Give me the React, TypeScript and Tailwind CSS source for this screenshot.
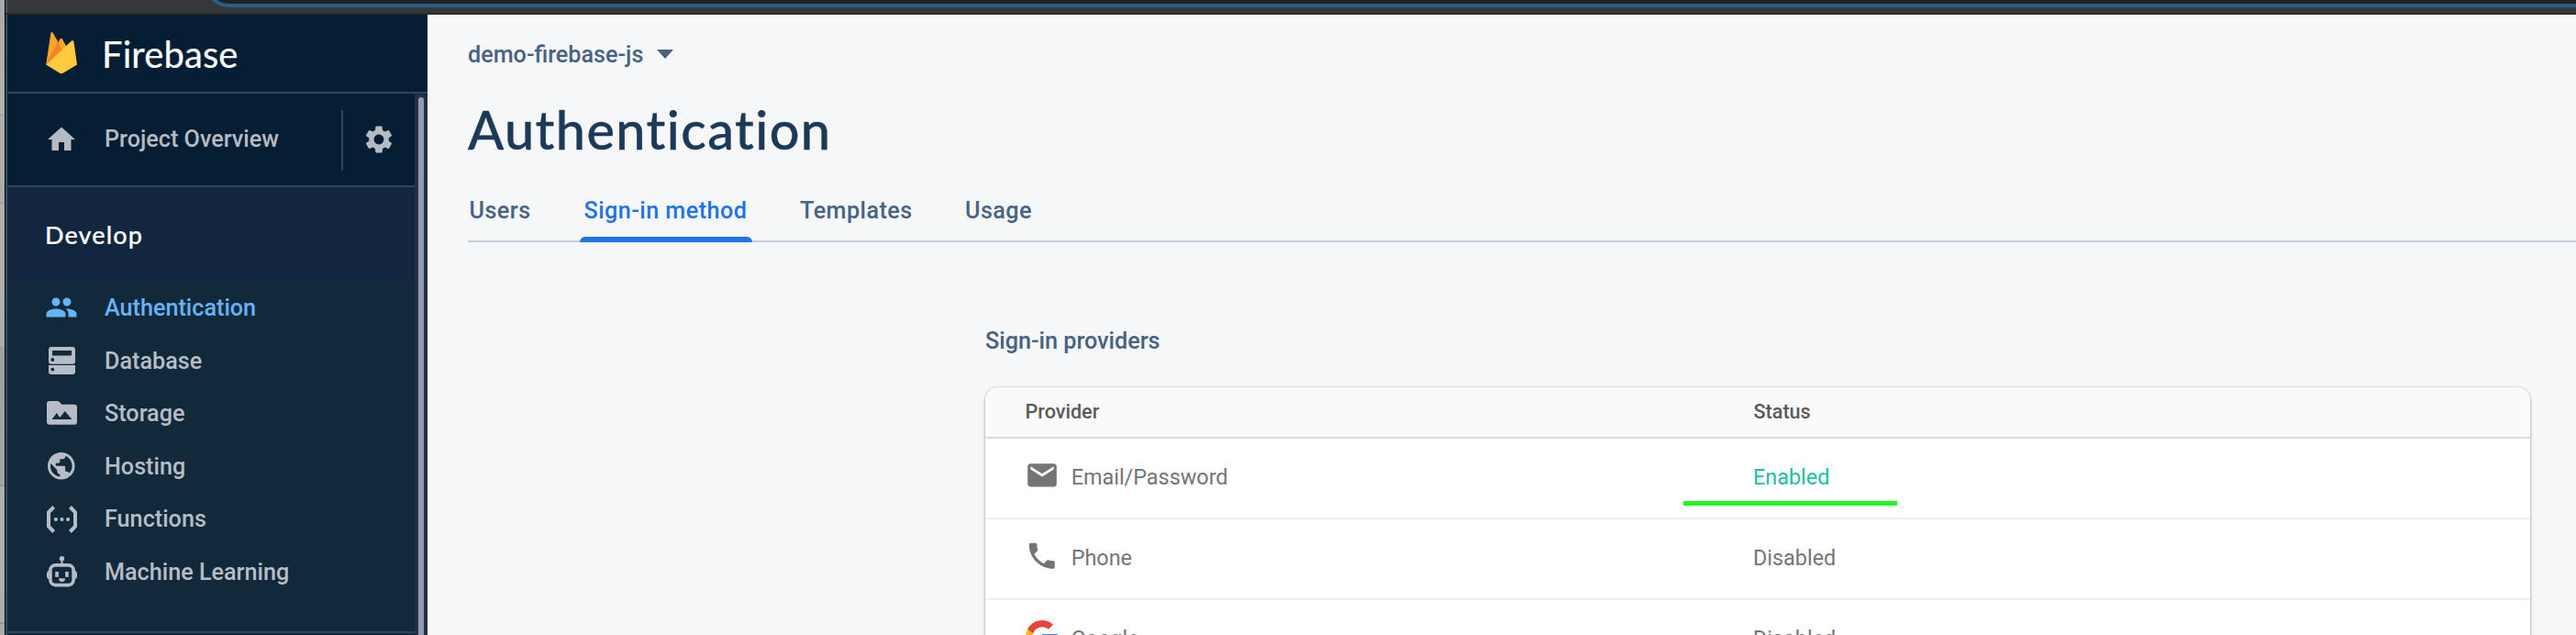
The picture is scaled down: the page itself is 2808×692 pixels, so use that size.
import React from "react";
import { MdHome, MdSettings, MdPeople, MdPublic, MdEmail, MdPhone } from "react-icons/md";

const FlameLogo = () => (
  <svg width="34" height="46" viewBox="0 0 34 46">
    <path d="M.2 35.6 5.4 1.1C5.6 0 7.1-.3 7.7.7l6 10.6L.2 35.6Z" fill="#ffa62b" />
    <path d="m.2 35.6 15.3-28c.6-1 1.9-1 2.4 0L23 17 .2 35.6Z" fill="#ffa62b" />
    <path d="m.2 35.6 12.6-24.8L18 20 .2 35.6Z" fill="#f5822a" />
    <path d="M.2 35.6 28 9.6c.8-.9 2.200-.4 2.400.7L34 35.600l-15.500 9.200c-1 .6-2.200.6-3.200 0L.2 35.600Z" fill="#ffca3e" />
  </svg>
);

const DatabaseIcon = () => (
  <svg width="29" height="30" viewBox="0 0 29 30" fill="currentColor">
    <path
      fillRule="evenodd"
      d="M3 0h23a3 3 0 0 1 3 3v12.700a3 3 0 0 1-3 3H3a3 3 0 0 1-3-3V3a3 3 0 0 1 3-3Zm1 4v5.500h21V4H4Zm.3 8.100a1.900 1.900 0 1 0 0 3.800 1.900 1.900 0 0 0 0-3.800ZM0 20h29v7a3 3 0 0 1-3 3H3a3 3 0 0 1-3-3v-7Zm4.300 2.700a1.900 1.900 0 1 0 0 3.800 1.900 1.900 0 0 0 0-3.800Z"
    />
  </svg>
);

const StorageIcon = () => (
  <svg width="33" height="26" viewBox="0 0 33 26" fill="currentColor">
    <path
      fillRule="evenodd"
      d="M3 0h9.500l4 3.700H30a3 3 0 0 1 3 3v16a3 3 0 0 1-3 3H3a3 3 0 0 1-3-3V3a3 3 0 0 1 3-3Zm2.700 19.900h21.600L19.800 11l-5.600 7-3.400-4.900-5.100 6.800Z"
    />
  </svg>
);

const FunctionsIcon = () => (
  <svg width="33" height="30" viewBox="0 0 33 30" fill="none">
    <path d="M7.600 1.500 2 7.300v15.400l5.600 5.800M25.400 1.500 31 7.300v15.400l-5.600 5.800" stroke="currentColor" strokeWidth="4" />
    <circle cx="9.900" cy="15" r="2.100" fill="currentColor" />
    <circle cx="16.500" cy="15" r="2.100" fill="currentColor" />
    <circle cx="23.100" cy="15" r="2.100" fill="currentColor" />
  </svg>
);

const RobotIcon = () => (
  <svg width="33" height="34" viewBox="0 0 33 34" fill="currentColor">
    <circle cx="16.500" cy="2.700" r="2.700" />
    <rect x="15.500" y="4" width="2" height="5" />
    <rect x="3.900" y="9.900" width="25.200" height="21.700" rx="5.500" fill="none" stroke="currentColor" strokeWidth="3.600" />
    <path d="M2.500 15.500v10C1 25 0 23.500 0 22v-3c0-1.500 1-3 2.500-3.500ZM30.500 15.500v10c1.500-.5 2.500-2 2.500-3.500v-3c0-1.500-1-3-2.500-3.500Z" />
    <rect x="9.200" y="17" width="3.700" height="5.800" />
    <rect x="20.100" y="17" width="3.700" height="5.800" />
    <path d="M13.200 24.300h6.600v1c0 1.500-1.200 2.700-2.700 2.700h-1.200c-1.500 0-2.700-1.200-2.700-2.700v-1Z" />
  </svg>
);

const GoogleIcon = () => (
  <svg width="36" height="36" viewBox="0 0 48 48">
    <path fill="#ea4335" d="M24 9.500c3.540 0 6.710 1.220 9.210 3.600l6.850-6.850C35.900 2.380 30.470 0 24 0 14.620 0 6.510 5.380 2.560 13.220l7.980 6.190C12.430 13.720 17.740 9.500 24 9.500z" />
    <path fill="#4285f4" d="M46.980 24.550c0-1.570-.15-3.090-.38-4.550H24v9.020h12.940c-.58 2.960-2.260 5.480-4.780 7.180l7.730 6c4.510-4.180 7.090-10.360 7.090-17.650z" />
    <path fill="#fbbc05" d="M10.530 28.590c-.48-1.450-.76-2.990-.76-4.590s.27-3.140.76-4.590l-7.980-6.190C.92 16.460 0 20.120 0 24c0 3.880.92 7.540 2.560 10.780l7.970-6.190z" />
    <path fill="#34a853" d="M24 48c6.480 0 11.930-2.130 15.890-5.810l-7.730-6c-2.150 1.450-4.920 2.300-8.160 2.300-6.260 0-11.570-4.220-13.470-9.910l-7.980 6.190C6.510 42.620 14.620 48 24 48z" />
  </svg>
);

const navItems = [
  { label: "Authentication", icon: <MdPeople size={36} />, active: true },
  { label: "Database", icon: <DatabaseIcon /> },
  { label: "Storage", icon: <StorageIcon /> },
  { label: "Hosting", icon: <MdPublic size={35.5} /> },
  { label: "Functions", icon: <FunctionsIcon /> },
  { label: "Machine Learning", icon: <RobotIcon /> },
];

const tabs = [
  { label: "Users", box: "w-[122px] pl-[1.5px]" },
  { label: "Sign-in method", box: "w-[188px] pl-[4.5px]", active: true },
  { label: "Templates", box: "w-[232px] pl-[52px]" },
  { label: "Usage", box: "w-[120px]" },
];

const providers = [
  { name: "Email/Password", status: "Enabled", icon: <MdEmail size={39.6} /> },
  { name: "Phone", status: "Disabled", icon: <MdPhone size={37.5} /> },
  { name: "Google", status: "Disabled", icon: <GoogleIcon /> },
];

function Sidebar() {
  return (
    <aside className="flex w-[460px] shrink-0 flex-col bg-[#12283b] shadow-[inset_2px_0_0_#3f4e60]">
      <div className="flex h-[86px] shrink-0 items-center border-b-2 border-[#2a4661] bg-[#051e34] pl-11 shadow-[inset_2px_0_0_#3f4e60]">
        <FlameLogo />
        <span className="pl-[27px] pt-0.5 font-['Lato',sans-serif] text-[40px] leading-none tracking-[0.1px] text-white [-webkit-text-stroke:0.2px_white]">Firebase</span>
      </div>
      <div className="flex min-h-0 grow">
        <div className="flex min-w-0 grow flex-col">
          <div className="flex h-[102px] shrink-0 items-center border-b-2 border-[#2a4661] bg-[#051e34] pl-[43px] text-[#b4bbc1] shadow-[inset_2px_0_0_#3f4e60]">
            <MdHome size={36} />
            <span className="grow pl-[29px] font-medium">Project Overview</span>
            <div className="mt-0.5 h-[66px] w-0.5 bg-[#2a4661]" />
            <div className="flex w-[78px] justify-center">
              <MdSettings size={36} />
            </div>
          </div>
          <div className="flex h-[102.4px] shrink-0 items-center bg-[#12263f] pl-[43px] font-['Lato',sans-serif] text-[27px] font-medium leading-none tracking-[1.1px] text-white shadow-[inset_2px_0_0_#3f4e60] [-webkit-text-stroke:0.2px_white]">
            Develop
          </div>
          <nav className="flex flex-col border-b-2 border-[#2a4661] pb-9">
            {navItems.map((item) => (
              <div
                key={item.label}
                className={`flex h-[57.6px] items-center pl-[43px] font-medium ${item.active ? "text-[#68b3f8]" : "text-[#b6bdc6]"}`}
              >
                <span className="flex w-9 justify-center">{item.icon}</span>
                <span className="pl-[29px] pt-px">{item.label}</span>
              </div>
            ))}
          </nav>
        </div>
        <div className="flex w-3.5 shrink-0 justify-center rounded-t-[7px] bg-[#292e3c] px-1 pt-1">
          <div className="w-1.5 rounded-t-[3px] bg-[#8b9cb5]" />
        </div>
      </div>
    </aside>
  );
}

function ProvidersCard() {
  return (
    <section className="ml-[564px] mt-[72px] w-[1684px]">
      <h2 className="flex h-[86px] items-start pt-[20.5px] font-medium leading-[30px] text-[#476282]">Sign-in providers</h2>
      <div className="overflow-hidden rounded-t-[14.4px] bg-white shadow-[0_2px_4px_rgba(0,0,0,0.26),0_0_2px_rgba(0,0,0,0.26)]">
        <div className="flex h-14 items-center border-b-2 border-[#dcdcdc] bg-[#fafafa] text-[21.6px] font-medium text-[#5a5a5a]">
          <span className="w-[837.500px] pl-[43.5px]">Provider</span>
          <span>Status</span>
        </div>
        {providers.map((p) => (
          <div key={p.name} className="relative flex h-[88px] items-center border-b-2 border-[#f0f0f0] text-[23.4px] text-[#757575]">
            <div className="flex w-[837px] items-center pl-[43px]">
              <span className="flex w-[38px] justify-center pb-[7px]">{p.icon}</span>
              <span className="pl-[12.7px]">{p.name}</span>
            </div>
            <span>
              {p.status === "Enabled" ? <span className="text-[#1cbfa3]">{p.status}</span> : p.status}
            </span>
            {p.status === "Enabled" && <div className="absolute left-[761px] top-[68px] h-[5px] w-[233px] bg-[#22f622]" />}
          </div>
        ))}
      </div>
    </section>
  );
}

export default function App() {
  return (
    <div className="flex h-[692px] w-[2808px] overflow-hidden bg-[#f6f7f9] font-['Roboto',sans-serif] text-[25.2px] leading-none">
      <div className="w-[5px] shrink-0 bg-[linear-gradient(#aaaaaa_0,#b2b2b2_124px,#9ea4aa_124px,#9ea4aa_126px,#adadad_126px,#adadad_220px,#9c9ea8_220px,#9c9ea8_222px,#b0b0b0_222px,#adadad_378px,#9c9ea8_378px,#9c9ea8_380px,#9da3a2_380px,#a2a7a6_528px,#8e959c_528px,#8e959c_530px,#b0b0b0_530px,#adadad_678px,#8e959c_678px,#8e959c_680px,#aaaaaa_680px)]" />
      <div className="w-px shrink-0 bg-black" />
      <div className="flex min-w-0 grow flex-col">
        <div className="h-4 shrink-0 overflow-hidden border-b-2 border-[#2a2a28] bg-[#36373a] pl-[216px] shadow-[inset_2px_0_0_#55565a]">
          <div className="-mt-12 h-14 w-[2700px] rounded-full border-4 border-[#275f86] bg-[#202124]" />
        </div>
        <div className="flex min-h-0 grow">
          <Sidebar />
          <main className="min-w-0 grow pl-11">
            <div className="flex h-[86px] items-center font-medium text-[#476282]">
              <span className="pt-0.5">demo-firebase-js</span>
              <svg className="ml-[15px]" width="18" height="10" viewBox="0 0 18 10" fill="currentColor">
                <path d="M0 0h18L9 10Z" />
              </svg>
            </div>
            <h1 className="flex h-[76px] items-center pt-0.5 font-['Lato',sans-serif] text-[57.6px] font-medium leading-none tracking-[1.4px] text-[#1c3a57] [-webkit-text-stroke:0.4px_#1c3a57]">Authentication</h1>
            <div className="flex h-[86px] border-b-2 border-[#c3cfdf] font-medium tracking-[0.45px]">
              {tabs.map((tab) => (
                <div key={tab.label} className={`relative flex items-center pt-[19px] ${tab.box} ${tab.active ? "text-[#1f73e8]" : "text-[#476282]"}`}>
                  {tab.label}
                  {tab.active && <div className="absolute -bottom-0.5 left-0 h-1.5 w-full rounded-t-md bg-[#1f73e8]" />}
                </div>
              ))}
            </div>
            <ProvidersCard />
          </main>
        </div>
      </div>
    </div>
  );
}
